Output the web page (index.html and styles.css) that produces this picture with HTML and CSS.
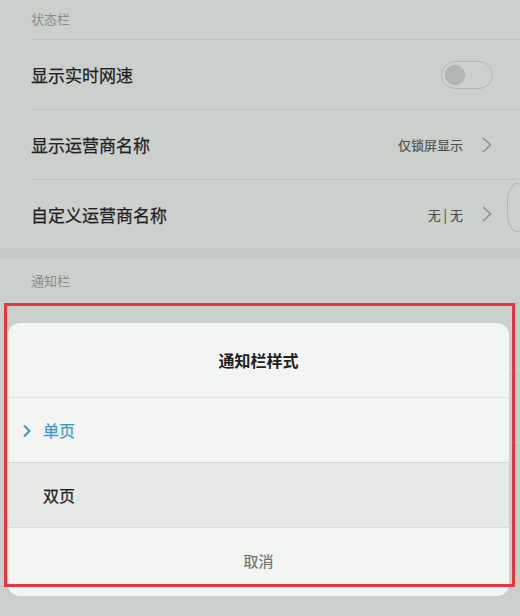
FILE: index.html
```html
<!DOCTYPE html>
<html lang="zh-CN">
<head>
<meta charset="utf-8">
<title>通知栏样式</title>
<link rel="stylesheet" href="styles.css">
</head>
<body>
<div class="screen">
  <div class="section-head first"><span>状态栏</span></div>
  <div class="row">
    <span class="label">显示实时网速</span>
    <span class="toggle"><span class="knob"></span></span>
  </div>
  <div class="row">
    <span class="label">显示运营商名称</span>
    <span class="value">仅锁屏显示</span>
    <svg class="chev" width="12" height="18" viewBox="0 0 12 18"><path d="M2 2 L9.5 9 L2 16" fill="none" stroke="#8e928e" stroke-width="1.6"/></svg>
  </div>
  <div class="row last">
    <span class="label">自定义运营商名称</span>
    <span class="value">无 | 无</span>
    <svg class="chev" width="12" height="18" viewBox="0 0 12 18"><path d="M2 2 L9.5 9 L2 16" fill="none" stroke="#8e928e" stroke-width="1.6"/></svg>
  </div>
  <div class="band"></div>
  <div class="section-head"><span>通知栏</span></div>
  <div class="row bg-row"></div>
  <div class="row bg-row"></div>

  <div class="edge"></div>

  <div class="dialog">
    <div class="d-title">通知栏样式</div>
    <div class="d-item selected">
      <svg class="d-chev" width="10" height="14" viewBox="0 0 10 14"><path d="M2 1.5 L7.5 7 L2 12.5" fill="none" stroke="#3d93c4" stroke-width="2"/></svg>
      <span>单页</span>
    </div>
    <div class="d-item alt"><span>双页</span></div>
    <div class="d-cancel">取消</div>
  </div>
  <div class="highlight"></div>
</div>
</body>
</html>
```
FILE: styles.css
```css
html, body {
  margin: 0;
  padding: 0;
}
body {
  width: 520px;
  height: 616px;
  overflow: hidden;
  background: #c9cdc9;
  font-family: "Noto Sans CJK SC", "Noto Sans", sans-serif;
}
.screen {
  position: relative;
  width: 520px;
  height: 616px;
  overflow: hidden;
  background: #ccd0cc;
}
.section-head {
  height: 45px;
  margin-left: 31px;
  display: flex;
  align-items: center;
  font-size: 13px;
  color: #8a8e8a;
  border-bottom: 1px solid #bec2be;
}
.section-head.first {
  height: 36px;
  padding-bottom: 3px;
}
.row {
  height: 69px;
  margin-left: 31px;
  border-bottom: 1px solid #bec2be;
  display: flex;
  align-items: center;
  padding-right: 27px;
}
.row.last {
  border-bottom: none;
  height: 68px;
}
.label {
  font-size: 17px;
  color: #1f211f;
  flex: 1;
  -webkit-text-stroke: 0.25px #1f211f;
}
.value {
  font-size: 13px;
  color: #505450;
  margin-right: 18px;
  -webkit-text-stroke: 0.2px #505450;
}
.chev {
  display: block;
}
.toggle {
  width: 47px;
  height: 26px;
  border: 1.5px solid #b4b8b4;
  border-radius: 15px;
  display: flex;
  align-items: center;
  padding-left: 3px;
  box-sizing: content-box;
}
.knob {
  width: 20px;
  height: 20px;
  border-radius: 50%;
  background: #b3b6b3;
  border: 1px solid #a9ada9;
  box-sizing: border-box;
}
.band {
  height: 10px;
  background: #c4c8c4;
}
.bg-row {
  height: 70px;
}
.edge {
  position: absolute;
  left: 507px;
  top: 183px;
  width: 18px;
  height: 47px;
  border: 1.5px solid #b2b6b2;
  border-radius: 12px / 24px;
}
.dialog {
  position: absolute;
  left: 8px;
  top: 323px;
  width: 501px;
  height: 273px;
  background: #f3f5f3;
  border-radius: 12px;
  overflow: hidden;
  display: flex;
  flex-direction: column;
}
.d-title {
  height: 74px;
  display: flex;
  align-items: center;
  justify-content: center;
  font-size: 16px;
  font-weight: bold;
  color: #1f211f;
  border-bottom: 1px solid #dfe2df;
}
.d-item {
  height: 64px;
  display: flex;
  align-items: center;
  padding-left: 35px;
  font-size: 16px;
  color: #1f211f;
  -webkit-text-stroke: 0.25px currentColor;
  border-bottom: 1px solid #d8dbd8;
  position: relative;
}
.d-item.selected {
  color: #4198c6;
}
.d-chev {
  position: absolute;
  left: 14px;
  top: 26px;
}
.d-item.alt {
  background: #e6e9e6;
}
.d-cancel {
  flex: 1;
  display: flex;
  align-items: center;
  justify-content: center;
  padding-bottom: 3px;
  font-size: 15px;
  color: #6f736f;
  -webkit-text-stroke: 0.2px #6f736f;
}
.highlight {
  position: absolute;
  left: 4px;
  top: 303px;
  width: 505px;
  height: 278px;
  border: 3px solid #e6363e;
}
```
